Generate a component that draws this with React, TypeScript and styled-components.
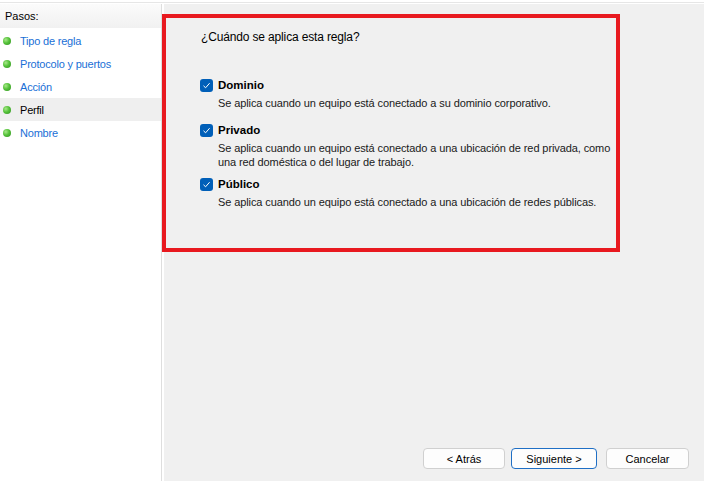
import * as React from 'react';
import styled, { createGlobalStyle } from 'styled-components';

const GlobalStyle = createGlobalStyle`
  html, body {
    margin: 0;
    padding: 0;
    background: #ffffff;
  }
  body {
    font-family: 'Liberation Sans', Arial, sans-serif;
    font-size: 12px;
    color: #000000;
  }
`;

const Window = styled.div`
  position: relative;
  width: 704px;
  height: 481px;
  overflow: hidden;
  display: flex;
  flex-direction: column;
  background: #ffffff;
`;

const TopStrip = styled.div`
  height: 2px;
  border-bottom: 1px solid #e6e6e6;
  margin-bottom: 1px;
`;

const Body = styled.div`
  flex: 1;
  display: flex;
`;

const StepsPane = styled.div`
  width: 161px;
  border-right: 1px solid #dedede;
  margin-right: 2px;
  background: #ffffff;
`;

const StepsHeader = styled.div`
  height: 24px;
  display: flex;
  align-items: center;
  padding-left: 5px;
  background: linear-gradient(#fbfbfb, #f1f1f1);
  color: #000000;
  font-size: 11px;
  margin-bottom: 1px;
`;

const StepRow = styled.div<{ $current?: boolean }>`
  height: 23px;
  display: flex;
  align-items: center;
  padding-left: 3px;
  gap: 9px;
  background: ${(p) => (p.$current ? '#efefef' : 'transparent')};
  color: ${(p) => (p.$current ? '#000000' : '#1a6fd6')};
  font-size: 11px;
  letter-spacing: -0.2px;
`;

const Bullet = styled.span`
  width: 8px;
  height: 8px;
  border-radius: 50%;
  background: radial-gradient(circle at 35% 35%, #a8e88a 0%, #55c23a 45%, #2f8f1f 100%);
  flex-shrink: 0;
`;

const MainPane = styled.div`
  flex: 1;
  background: #f0f0f0;
  display: flex;
  flex-direction: column;
`;

const Content = styled.div`
  flex: 1;
  padding: 25px 0 0 36px;
`;

const Question = styled.div`
  line-height: 16px;
  margin-bottom: 32px;
  padding-left: 1px;
  letter-spacing: -0.15px;
`;

const Option = styled.div<{ $after: number }>`
  margin-bottom: ${(p) => p.$after}px;
`;

const OptionLabel = styled.label`
  display: flex;
  align-items: center;
  gap: 5px;
  height: 16px;
  font-weight: bold;
  font-size: 11.5px;
  margin-bottom: 3px;
`;

const Check = styled.span`
  width: 13px;
  height: 13px;
  border-radius: 3px;
  background: #005fb8;
  display: flex;
  align-items: center;
  justify-content: center;
`;

const OptionText = styled.div`
  padding-left: 18px;
  line-height: 14px;
  font-size: 11px;
  letter-spacing: -0.1px;
  color: #1a1a1a;
  width: 400px;
`;

const ButtonBar = styled.div`
  display: flex;
  justify-content: flex-end;
  padding: 0 15px 12px 0;
`;

const Button = styled.button<{ $primary?: boolean; $w: number; $gap: number }>`
  width: ${(p) => p.$w}px;
  height: 21px;
  margin-left: ${(p) => p.$gap}px;
  border-radius: 4px;
  background: #fdfdfd;
  border: 1px solid ${(p) => (p.$primary ? '#1f6fc5' : '#d0d0d0')};
  font-family: 'Liberation Sans', Arial, sans-serif;
  font-size: 11px;
  color: #000000;
  padding: 0;
`;

const Highlight = styled.div`
  position: absolute;
  left: 162px;
  top: 14px;
  width: 458px;
  height: 238px;
  box-sizing: border-box;
  border: 4px solid #e8191f;
  pointer-events: none;
`;

const steps = ['Tipo de regla', 'Protocolo y puertos', 'Acción', 'Perfil', 'Nombre'];

const options = [
  {
    label: 'Dominio',
    text: 'Se aplica cuando un equipo está conectado a su dominio corporativo.',
    after: 12,
  },
  {
    label: 'Privado',
    text: 'Se aplica cuando un equipo está conectado a una ubicación de red privada, como una red doméstica o del lugar de trabajo.',
    after: 7,
  },
  {
    label: 'Público',
    text: 'Se aplica cuando un equipo está conectado a una ubicación de redes públicas.',
    after: 0,
  },
];

const CheckMark = () => (
  <svg width="9" height="9" viewBox="0 0 9 9">
    <path d="M1.5 4.8 L3.6 6.8 L7.6 2.2" fill="none" stroke="#ffffff" strokeWidth="1" />
  </svg>
);

const App: React.FC = () => (
  <>
    <GlobalStyle />
    <Window>
      <TopStrip />
      <Body>
        <StepsPane>
          <StepsHeader>Pasos:</StepsHeader>
          {steps.map((s) => (
            <StepRow key={s} $current={s === 'Perfil'}>
              <Bullet />
              {s}
            </StepRow>
          ))}
        </StepsPane>
        <MainPane>
          <Content>
            <Question>¿Cuándo se aplica esta regla?</Question>
            {options.map((o) => (
              <Option key={o.label} $after={o.after}>
                <OptionLabel>
                  <Check>
                    <CheckMark />
                  </Check>
                  {o.label}
                </OptionLabel>
                <OptionText>{o.text}</OptionText>
              </Option>
            ))}
          </Content>
          <ButtonBar>
            <Button $w={82} $gap={0}>&lt; Atrás</Button>
            <Button $w={86} $gap={6} $primary>Siguiente &gt;</Button>
            <Button $w={83} $gap={9}>Cancelar</Button>
          </ButtonBar>
        </MainPane>
      </Body>
      <Highlight />
    </Window>
  </>
);

export default App;
